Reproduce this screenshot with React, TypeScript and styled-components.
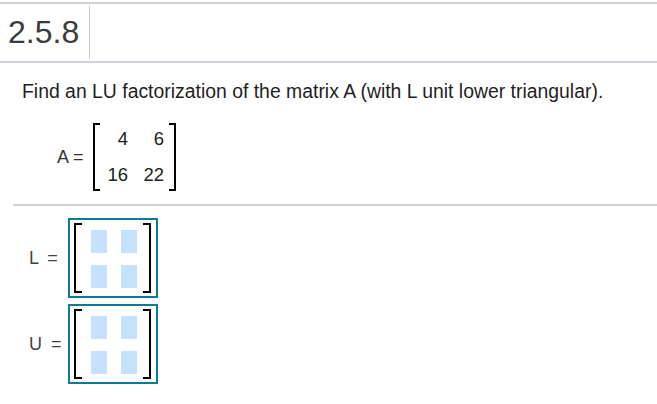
import React from "react";
import styled, { createGlobalStyle } from "styled-components";

const Global = createGlobalStyle`
  html, body { margin: 0; padding: 0; background: #fff; }
  body { font-family: "Liberation Sans", Arial, sans-serif; color: #222; }
`;

const Page = styled.div`
  width: 657px;
  height: 404px;
  overflow: hidden;
  padding-top: 2px;
  box-sizing: border-box;
`;

const Header = styled.div`
  display: flex;
  height: 57px;
  border-top: 2px solid #cfd3de;
  border-bottom: 2px solid #cfd3de;
`;

const Title = styled.div`
  width: 81px;
  padding-left: 8px;
  margin: 2px 0;
  border-right: 1px solid #cccccc;
  font-size: 32px;
  color: #3c3c3c;
  display: flex;
  align-items: center;
`;

const Question = styled.p`
  margin: 16px 0 0 22px;
  font-size: 19.4px;
  line-height: 24px;
  color: #1f1f1f;
`;

const GivenRow = styled.div`
  display: flex;
  align-items: center;
  margin: 20px 0 0 57px;
`;

const Label = styled.span<{ $w: number }>`
  width: ${(p) => p.$w}px;
  font-size: 18px;
  color: #333;
  white-space: nowrap;
`;

const Bracket = styled.div<{ $side: "l" | "r"; $h: number; $w: number }>`
  width: ${(p) => p.$w - 2}px;
  height: ${(p) => p.$h - 4}px;
  border: 2px solid #000;
  ${(p) => (p.$side === "l" ? "border-right: none;" : "border-left: none;")}
`;

const NumGrid = styled.div`
  display: grid;
  grid-template-columns: 28px 36px;
  row-gap: 14px;
  margin: 0 5px 0 0;
  font-size: 18.5px;
  line-height: 22px;
  text-align: right;
  color: #222;
`;

const Separator = styled.hr`
  margin: 13px 0 0 13px;
  border: none;
  border-top: 2px solid #cfd3de;
  height: 0;
`;

const AnswerRow = styled.div<{ $top: number }>`
  display: flex;
  align-items: center;
  margin: ${(p) => p.$top}px 0 0 29px;
`;

const AnswerLabel = styled.span`
  width: 39px;
  font-size: 18px;
  color: #444;
  word-spacing: 4px;
`;

const AnswerBox = styled.div`
  display: flex;
  align-items: center;
  width: 90px;
  height: 80px;
  box-sizing: border-box;
  border: 2px solid #0c7a98;
  padding: 3px 5px 3px 4px;
`;

const CellGrid = styled.div`
  display: grid;
  grid-template-columns: 16px 16px;
  grid-template-rows: 23px 23px;
  column-gap: 14px;
  row-gap: 12px;
  margin: 1px 6px 0 9px;
`;

const Cell = styled.div`
  background: #c5e1fd;
`;

function AnswerMatrix({ label, top }: { label: string; top: number }) {
  return (
    <AnswerRow $top={top}>
      <AnswerLabel>{label} =</AnswerLabel>
      <AnswerBox>
        <Bracket $side="l" $h={70} $w={8} />
        <CellGrid>
          <Cell />
          <Cell />
          <Cell />
          <Cell />
        </CellGrid>
        <Bracket $side="r" $h={70} $w={8} />
      </AnswerBox>
    </AnswerRow>
  );
}

export default function App() {
  return (
    <>
      <Global />
      <Page>
        <Header>
          <Title>2.5.8</Title>
        </Header>
        <Question>
          Find an LU factorization of the matrix A (with L unit lower triangular).
        </Question>
        <GivenRow>
          <Label $w={36}>A =</Label>
          <Bracket $side="l" $h={68} $w={7} />
          <NumGrid>
            <span>4</span>
            <span>6</span>
            <span>16</span>
            <span>22</span>
          </NumGrid>
          <Bracket $side="r" $h={68} $w={7} />
        </GivenRow>
        <Separator />
        <AnswerMatrix label="L" top={12} />
        <AnswerMatrix label="U" top={6} />
      </Page>
    </>
  );
}
